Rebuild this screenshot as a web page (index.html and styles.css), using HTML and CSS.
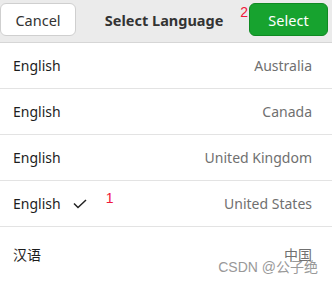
FILE: index.html
```html
<!DOCTYPE html>
<html lang="en">
<head>
  <meta charset="UTF-8">
  <meta name="viewport" content="width=device-width, initial-scale=1.0">
  <title>Select Language</title>
  <link rel="stylesheet" href="styles.css">
</head>
<body>
  <header class="bar">
    <button class="btn cancel">Cancel</button>
    <div class="title">Select Language</div>
    <div class="select-wrap">
      <span class="mark mark-2">2</span>
      <button class="btn select">Select</button>
    </div>
  </header>

  <ul class="langs">
    <li class="row"><span class="lang">English</span><span class="region">Australia</span></li>
    <li class="row"><span class="lang">English</span><span class="region">Canada</span></li>
    <li class="row"><span class="lang">English</span><span class="region">United Kingdom</span></li>
    <li class="row">
      <span class="lang">English
        <svg class="check" width="14" height="10" viewBox="0 0 14 10"><path d="M1 4.5 L5 8.5 L13 1" fill="none" stroke="#222" stroke-width="1.5"/></svg>
        <span class="mark mark-1">1</span>
      </span>
      <span class="region">United States</span>
    </li>
    <li class="row last"><span class="lang">汉语</span><span class="region">中国</span></li>
  </ul>

  <div class="watermark">CSDN @公子绝</div>
</body>
</html>
```

FILE: styles.css
```css
body {
  margin: 0;
  font-family: "Noto Sans", "Noto Sans CJK SC", sans-serif;
  background: #fff;
  color: #1d1d1d;
  width: 332px;
  height: 285px;
  overflow: hidden;
  position: relative;
}
.bar {
  height: 43px;
  background: #ebebeb;
  border-bottom: 1px solid #d6d6d6;
  display: flex;
  align-items: center;
  padding: 0 4px 0 0;
  box-sizing: border-box;
}
.btn {
  height: 33px;
  border-radius: 6px;
  font-family: inherit;
  font-size: 14.5px;
  padding: 0;
  margin-top: -3px;
}
.cancel {
  width: 76px;
  background: #fff;
  border: 1px solid #cfcfcf;
  color: #333;
}
.title {
  flex: 1;
  text-align: center;
  font-weight: bold;
  font-size: 14.5px;
  color: #333;
  margin-top: -3px;
  padding-left: 12px;
}
.select-wrap {
  display: flex;
  align-items: flex-start;
  gap: 1px;
}
.select {
  width: 79px;
  background: #17a32f;
  border: 1px solid #0f8a22;
  color: #fff;
}
.mark {
  color: #f0183c;
  font-family: "Liberation Sans", sans-serif;
  font-size: 14px;
  line-height: 1;
}
.mark-2 { margin-top: -1px; }
.langs {
  list-style: none;
  margin: 0;
  padding: 0;
}
.row {
  height: 45px;
  border-bottom: 1px solid #e3e3e3;
  display: flex;
  align-items: center;
  justify-content: space-between;
  padding: 0 20px 0 13px;
  font-size: 14px;
}
.row.last {
  height: 54px;
  border-bottom: none;
}
.lang {
  display: flex;
  align-items: center;
  color: #1d1d1d;
}
.check { margin-left: 12px; }
.mark-1 { margin-left: 19px; margin-top: -12px; }
.region { color: #707070; }
.watermark {
  position: absolute;
  right: 14px;
  bottom: 9px;
  font-family: "Liberation Sans", "Noto Sans CJK SC", sans-serif;
  font-size: 14px;
  color: #999;
}
```
